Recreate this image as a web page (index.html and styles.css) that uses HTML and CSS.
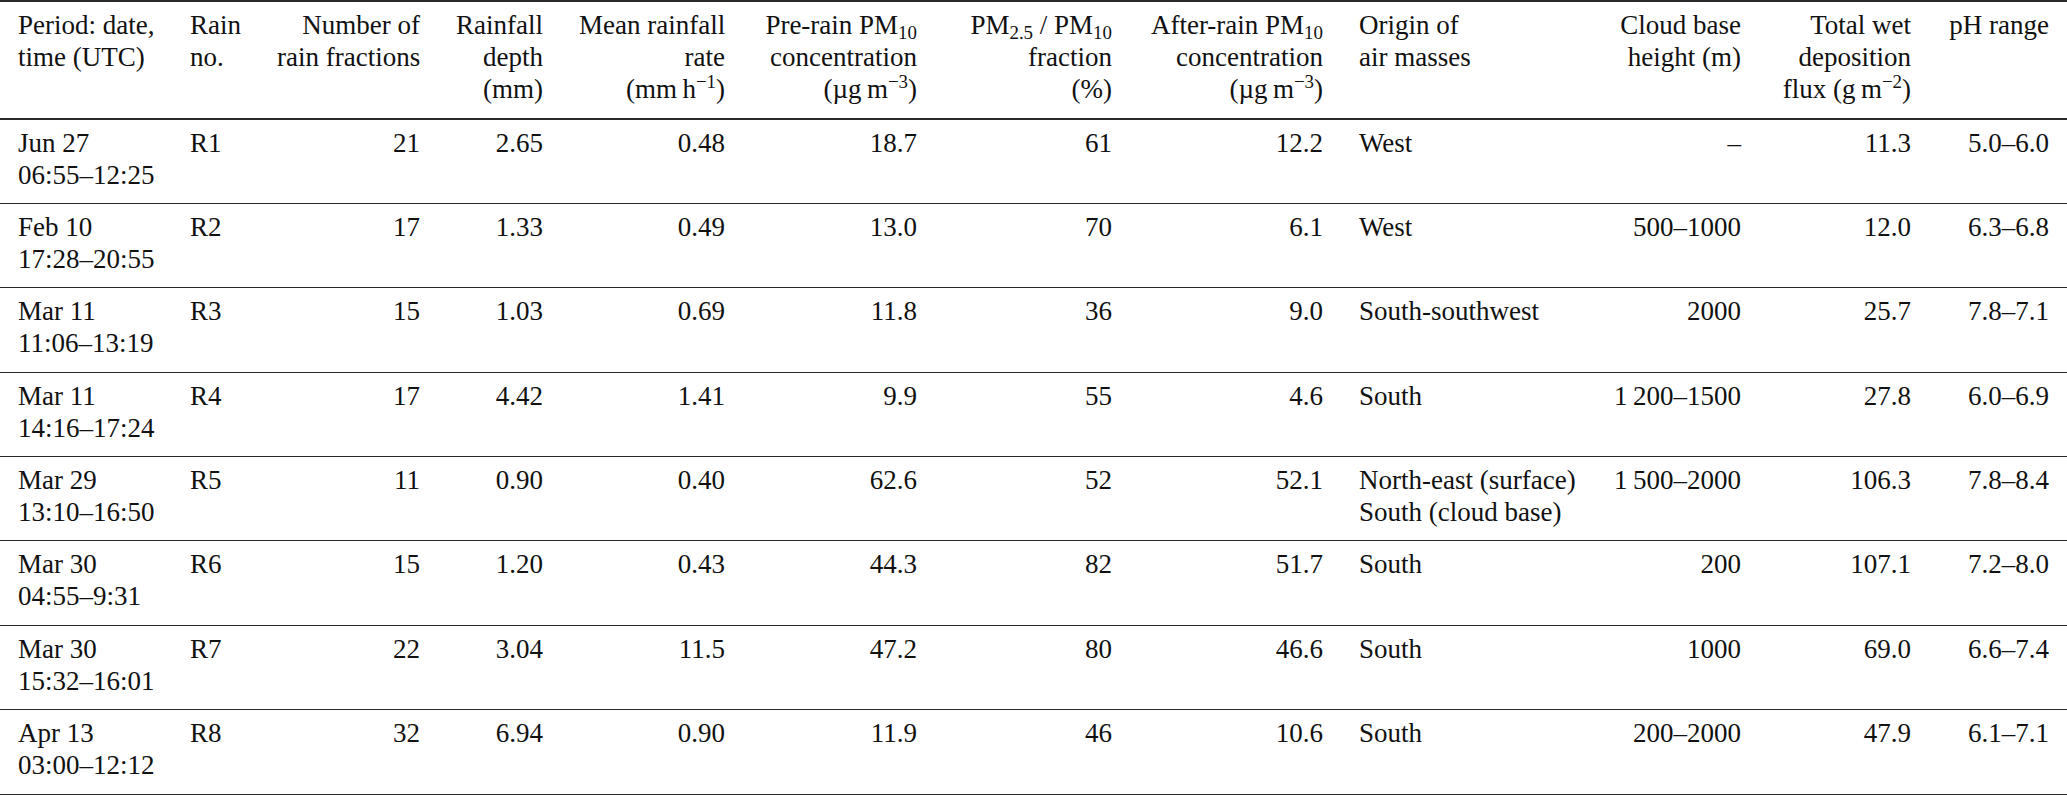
FILE: index.html
```html
<!DOCTYPE html>
<html lang="en">
<head>
<meta charset="utf-8">
<title>Rain events</title>
<link rel="stylesheet" href="styles.css">
</head>
<body>
<table class="data">
  <colgroup>
    <col class="c1"><col class="c2"><col class="c3"><col class="c4"><col class="c5"><col class="c6">
    <col class="c7"><col class="c8"><col class="c9"><col class="c10"><col class="c11"><col class="c12">
  </colgroup>
  <thead>
    <tr>
      <th class="l">Period: date,<br>time (UTC)</th>
      <th class="l">Rain<br>no.</th>
      <th class="r">Number of<br>rain fractions</th>
      <th class="r">Rainfall<br>depth<br>(mm)</th>
      <th class="r">Mean rainfall<br>rate<br>(mm&thinsp;h<sup>−1</sup>)</th>
      <th class="r">Pre-rain PM<sub>10</sub><br>concentration<br>(µg&thinsp;m<sup>−3</sup>)</th>
      <th class="r">PM<sub>2.5</sub> / PM<sub>10</sub><br>fraction<br>(%)</th>
      <th class="r">After-rain PM<sub>10</sub><br>concentration<br>(µg&thinsp;m<sup>−3</sup>)</th>
      <th class="l">Origin of<br>air masses</th>
      <th class="r">Cloud base<br>height (m)</th>
      <th class="r">Total wet<br>deposition<br>flux (g&thinsp;m<sup>−2</sup>)</th>
      <th class="r">pH range</th>
    </tr>
  </thead>
  <tbody>
    <tr>
      <td class="l">Jun 27<br>06:55–12:25</td><td class="l">R1</td><td class="r">21</td><td class="r">2.65</td><td class="r">0.48</td><td class="r">18.7</td><td class="r">61</td><td class="r">12.2</td><td class="l">West</td><td class="r">–</td><td class="r">11.3</td><td class="r">5.0–6.0</td>
    </tr>
    <tr>
      <td class="l">Feb 10<br>17:28–20:55</td><td class="l">R2</td><td class="r">17</td><td class="r">1.33</td><td class="r">0.49</td><td class="r">13.0</td><td class="r">70</td><td class="r">6.1</td><td class="l">West</td><td class="r">500–1000</td><td class="r">12.0</td><td class="r">6.3–6.8</td>
    </tr>
    <tr>
      <td class="l">Mar 11<br>11:06–13:19</td><td class="l">R3</td><td class="r">15</td><td class="r">1.03</td><td class="r">0.69</td><td class="r">11.8</td><td class="r">36</td><td class="r">9.0</td><td class="l">South-southwest</td><td class="r">2000</td><td class="r">25.7</td><td class="r">7.8–7.1</td>
    </tr>
    <tr>
      <td class="l">Mar 11<br>14:16–17:24</td><td class="l">R4</td><td class="r">17</td><td class="r">4.42</td><td class="r">1.41</td><td class="r">9.9</td><td class="r">55</td><td class="r">4.6</td><td class="l">South</td><td class="r">1&thinsp;200–1500</td><td class="r">27.8</td><td class="r">6.0–6.9</td>
    </tr>
    <tr>
      <td class="l">Mar 29<br>13:10–16:50</td><td class="l">R5</td><td class="r">11</td><td class="r">0.90</td><td class="r">0.40</td><td class="r">62.6</td><td class="r">52</td><td class="r">52.1</td><td class="l">North-east (surface)<br>South (cloud base)</td><td class="r">1&thinsp;500–2000</td><td class="r">106.3</td><td class="r">7.8–8.4</td>
    </tr>
    <tr>
      <td class="l">Mar 30<br>04:55–9:31</td><td class="l">R6</td><td class="r">15</td><td class="r">1.20</td><td class="r">0.43</td><td class="r">44.3</td><td class="r">82</td><td class="r">51.7</td><td class="l">South</td><td class="r">200</td><td class="r">107.1</td><td class="r">7.2–8.0</td>
    </tr>
    <tr>
      <td class="l">Mar 30<br>15:32–16:01</td><td class="l">R7</td><td class="r">22</td><td class="r">3.04</td><td class="r">11.5</td><td class="r">47.2</td><td class="r">80</td><td class="r">46.6</td><td class="l">South</td><td class="r">1000</td><td class="r">69.0</td><td class="r">6.6–7.4</td>
    </tr>
    <tr>
      <td class="l">Apr 13<br>03:00–12:12</td><td class="l">R8</td><td class="r">32</td><td class="r">6.94</td><td class="r">0.90</td><td class="r">11.9</td><td class="r">46</td><td class="r">10.6</td><td class="l">South</td><td class="r">200–2000</td><td class="r">47.9</td><td class="r">6.1–7.1</td>
    </tr>
  </tbody>
</table>
</body>
</html>
```
FILE: styles.css
```css
html, body {
  margin: 0;
  padding: 0;
  background: #ffffff;
}

body {
  font-family: "Liberation Serif", "Times New Roman", serif;
  font-size: 27px;
  line-height: 32px;
  color: #111111;
}

.data {
  width: 2067px;
  table-layout: fixed;
  border-collapse: collapse;
  border-top: 2px solid #2a2a2a;
  border-bottom: 1.5px solid #2a2a2a;
}

.c1 { width: 172px; }
.c2 { width: 87px; }
.c3 { width: 179px; }
.c4 { width: 123px; }
.c5 { width: 182px; }
.c6 { width: 192px; }
.c7 { width: 195px; }
.c8 { width: 211px; }
.c9 { width: 253px; }
.c10 { width: 165px; }
.c11 { width: 170px; }
.c12 { width: 138px; }

.data th,
.data td {
  padding: 7px 18px 12.4px;
  vertical-align: top;
  font-weight: normal;
  white-space: nowrap;
}

.data th {
  padding-bottom: 12.5px;
  border-bottom: 2px solid #2a2a2a;
}

.data tbody tr + tr td {
  border-top: 1px solid #2a2a2a;
}

.l { text-align: left; }
.r { text-align: right; }

sub, sup {
  font-size: 0.7em;
  line-height: 0;
  position: relative;
  vertical-align: baseline;
}

sub { top: 0.28em; }
sup { top: -0.55em; }
```
